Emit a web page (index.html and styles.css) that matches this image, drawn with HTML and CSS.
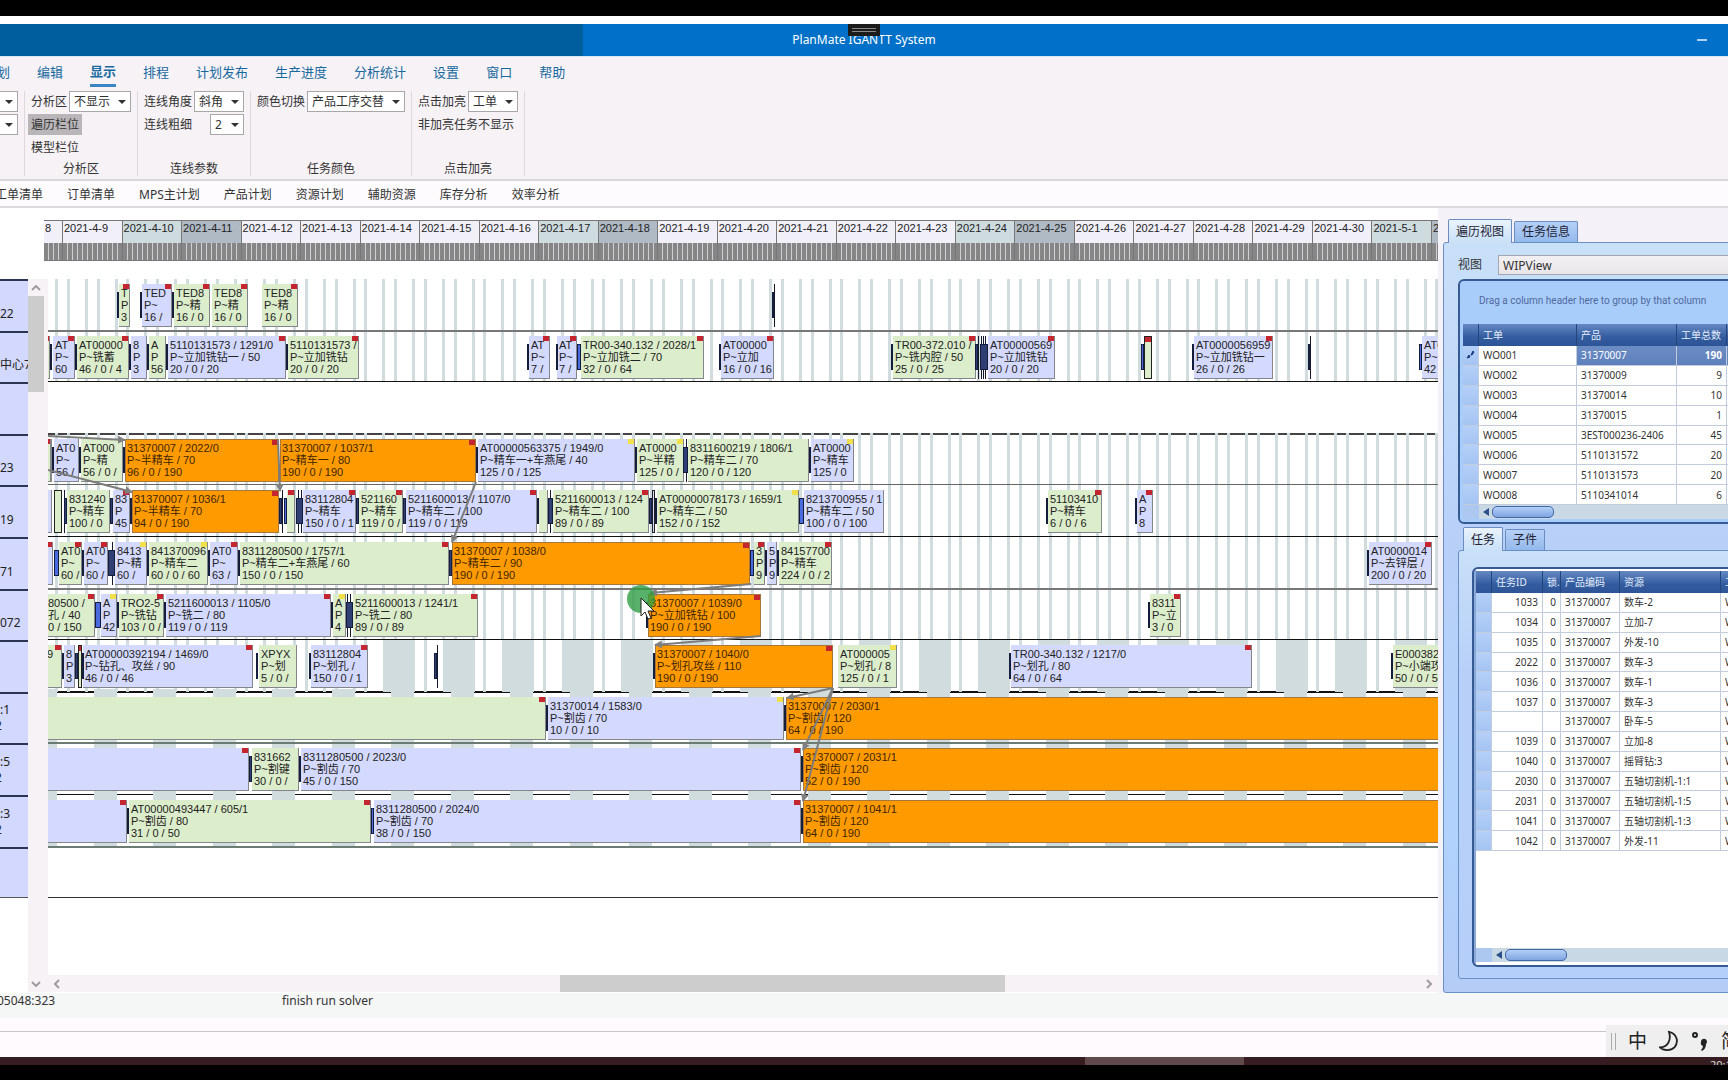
FILE: index.html
```html
<!DOCTYPE html>
<html lang="zh-CN">
<head>
<meta charset="utf-8">
<title>PlanMate IGANTT System</title>
<link rel="stylesheet" href="styles.css">
</head>
<body>
<div class="app">
  <header class="titlebar">
    <div class="titlebar-side"></div>
    <h1 class="title">PlanMate IGANTT System</h1>
    <div class="grip"><span></span></div>
    <button class="minimize" aria-label="最小化"></button>
  </header>

  <section class="ribbon">
    <nav class="menu">
      <button>计划</button>
      <button>编辑</button>
      <button class="active">显示</button>
      <button>排程</button>
      <button>计划发布</button>
      <button>生产进度</button>
      <button>分析统计</button>
      <button>设置</button>
      <button>窗口</button>
      <button>帮助</button>
    </nav>
    <div class="groups">
      <div class="group group-first">
        <div class="field"><span class="pick"><select aria-label="视图一"><option></option></select></span></div>
        <div class="field"><span class="pick"><select aria-label="视图二"><option></option></select></span></div>
      </div>
      <div class="group">
        <div class="field"><label for="area">分析区</label><span class="pick w-medium"><select id="area"><option>不显示</option></select></span></div>
        <div class="field"><button class="toggle on">遍历栏位</button></div>
        <div class="field"><button class="toggle">模型栏位</button></div>
        <div class="group-name">分析区</div>
      </div>
      <div class="group">
        <div class="field"><label for="angle">连线角度</label><span class="pick w-small"><select id="angle"><option>斜角</option></select></span></div>
        <div class="field"><label for="weight">连线粗细</label><span class="pick w-tiny"><select id="weight"><option>2</option></select></span></div>
        <div class="group-name">连线参数</div>
      </div>
      <div class="group">
        <div class="field"><label for="color">颜色切换</label><span class="pick w-large"><select id="color"><option>产品工序交替</option></select></span></div>
        <div class="group-name">任务颜色</div>
      </div>
      <div class="group">
        <div class="field"><label for="light">点击加亮</label><span class="pick w-small"><select id="light"><option>工单</option></select></span></div>
        <div class="field"><button class="toggle">非加亮任务不显示</button></div>
        <div class="group-name">点击加亮</div>
      </div>
    </div>
  </section>

  <nav class="sheets">
    <button>工单清单</button>
    <button>订单清单</button>
    <button>MPS主计划</button>
    <button>产品计划</button>
    <button>资源计划</button>
    <button>辅助资源</button>
    <button>库存分析</button>
    <button>效率分析</button>
  </nav>

  <main class="main">
    <section class="gantt">
      <div class="days" id="days"></div>
      <div class="gantt-body">
        <div class="resources" id="resources"></div>
        <div class="vscroll">
          <svg width="10" height="6" viewBox="0 0 10 6"><path d="M1 5 5 1 9 5"/></svg>
          <div class="vthumb"></div>
          <svg width="10" height="6" viewBox="0 0 10 6"><path d="M1 1 5 5 9 1"/></svg>
        </div>
        <div class="canvas" id="canvas"></div>
        <div class="hscroll">
          <svg width="6" height="10" viewBox="0 0 6 10"><path d="M5 1 1 5 5 9"/></svg>
          <div class="hthumb"></div>
          <svg width="6" height="10" viewBox="0 0 6 10"><path d="M1 1 5 5 1 9"/></svg>
        </div>
      </div>
    </section>

    <aside class="side">
      <div class="tabs">
        <button class="tab active">遍历视图</button>
        <button class="tab">任务信息</button>
      </div>
      <div class="pane">
        <div class="view"><label for="view">视图</label><input id="view" value="WIPView"></div>
        <div class="frame">
          <p class="hint">Drag a column header here to group by that column</p>
          <table class="data orders">
            <colgroup><col class="c-mark"><col class="c-order"><col class="c-product"><col class="c-total"><col></colgroup>
            <thead><tr><th></th><th>工单</th><th>产品</th><th>工单总数</th><th></th></tr></thead>
            <tbody>
              <tr class="selected"><td class="mark"><svg width="9" height="9" viewBox="0 0 9 9"><path d="M1 8 3 5 4 7zM5 5 7 1 8 2 6 5z" fill="#173a80" stroke="#173a80"/></svg></td><td>WO001</td><td>31370007</td><td>190</td><td></td></tr>
              <tr><td></td><td>WO002</td><td>31370009</td><td>9</td><td></td></tr>
              <tr><td></td><td>WO003</td><td>31370014</td><td>10</td><td></td></tr>
              <tr><td></td><td>WO004</td><td>31370015</td><td>1</td><td></td></tr>
              <tr><td></td><td>WO005</td><td>3EST000236-2406</td><td>45</td><td></td></tr>
              <tr><td></td><td>WO006</td><td>5110131572</td><td>20</td><td></td></tr>
              <tr><td></td><td>WO007</td><td>5110131573</td><td>20</td><td></td></tr>
              <tr><td></td><td>WO008</td><td>5110341014</td><td>6</td><td></td></tr>
            </tbody>
          </table>
          <div class="gridscroll"><i class="arrow"></i><i class="pill"></i></div>
        </div>
        <div class="tabs inner">
          <button class="tab active">任务</button>
          <button class="tab">子件</button>
        </div>
        <div class="pane pane-inner">
          <div class="frame frame-tasks">
            <table class="data tasks">
              <colgroup><col class="c-mark"><col class="c-id"><col class="c-lock"><col class="c-code"><col class="c-res"><col></colgroup>
              <thead><tr><th></th><th>任务ID</th><th>锁.</th><th>产品编码</th><th>资源</th><th>工单</th></tr></thead>
              <tbody>
                <tr><td></td><td>1033</td><td>0</td><td>31370007</td><td>数车-2</td><td>W</td></tr>
                <tr><td></td><td>1034</td><td>0</td><td>31370007</td><td>立加-7</td><td>W</td></tr>
                <tr><td></td><td>1035</td><td>0</td><td>31370007</td><td>外发-10</td><td>W</td></tr>
                <tr><td></td><td>2022</td><td>0</td><td>31370007</td><td>数车-3</td><td>W</td></tr>
                <tr><td></td><td>1036</td><td>0</td><td>31370007</td><td>数车-1</td><td>W</td></tr>
                <tr><td></td><td>1037</td><td>0</td><td>31370007</td><td>数车-3</td><td>W</td></tr>
                <tr><td></td><td></td><td></td><td>31370007</td><td>卧车-5</td><td>W</td></tr>
                <tr><td></td><td>1039</td><td>0</td><td>31370007</td><td>立加-8</td><td>W</td></tr>
                <tr><td></td><td>1040</td><td>0</td><td>31370007</td><td>摇臂钻:3</td><td>W</td></tr>
                <tr><td></td><td>2030</td><td>0</td><td>31370007</td><td>五轴切割机-1:1</td><td>W</td></tr>
                <tr><td></td><td>2031</td><td>0</td><td>31370007</td><td>五轴切割机-1:5</td><td>W</td></tr>
                <tr><td></td><td>1041</td><td>0</td><td>31370007</td><td>五轴切割机-1:3</td><td>W</td></tr>
                <tr><td></td><td>1042</td><td>0</td><td>31370007</td><td>外发-11</td><td>W</td></tr>
              </tbody>
            </table>
            <div class="gridscroll"><i class="arrow"></i><i class="pill"></i></div>
          </div>
        </div>
      </div>
    </aside>
  </main>

  <footer class="status"><span class="counter">05048:323</span><span>finish run solver</span></footer>
  <div class="dock">
    <div class="ime">
      <i class="handle"></i>
      <span>中</span>
      <svg width="20" height="22" viewBox="0 0 22 22"><path d="M11 1C20 3 22 12 17 18 13 22 5 22 1 18 9 18 14 11 11 1Z" fill="none" stroke="#222" stroke-width="2"/></svg>
      <svg width="18" height="22" viewBox="0 0 18 22"><circle cx="4" cy="5" r="2" fill="none" stroke="#222" stroke-width="2"/><path d="M10 12a3 3 0 1 1 5 2q0 5-4 7l-1-1q2-2 2-4a3 3 0 0 1-2-4z" fill="#222"/></svg>
      <span>简</span>
    </div>
  </div>
  <div class="taskbar"><div class="taskbar-item"></div><span>20:1</span></div>
</div>
<script src="app.js"></script>
</body>
</html>
```
FILE: styles.css
```css
* { box-sizing: border-box; }
body { margin: 0; background: #000; font: 12px/16px "Noto Sans", "Noto Sans CJK SC", sans-serif; color: #333; overflow: hidden; }
button, select, input { font: inherit; color: inherit; }
button { border: 0; background: none; padding: 0; white-space: nowrap; }
.app { display: flex; flex-direction: column; min-height: 100vh; padding: 16px 0; overflow: hidden; }

.titlebar { position: relative; display: flex; align-items: center; height: 41px; border-top: 8px solid #fff; border-bottom: 1px solid #d5e8f6; background: #0070c8; }
.titlebar-side { width: 583px; align-self: stretch; background: #005d9e; }
.title { position: absolute; left: 0; right: 0; margin: 0; text-align: center; font-size: 12px; font-weight: 400; line-height: 16px; color: #fff; }
.grip { position: absolute; top: 0; left: 50%; width: 32px; height: 12px; margin-left: -16px; padding: 4px; background: #1c1c1c; }
.grip span { display: block; height: 4px; border: solid #8a8a8a; border-width: 1px 0; }
.minimize { width: 10px; height: 2px; margin: 0 21px 0 auto; background: #a9d4f5; }

.ribbon { background: #f6f2f6; border-bottom: 2px solid #d9d5d9; height: 124px; }
.menu { display: flex; gap: 27px; height: 34px; margin-left: -16px; font-size: 13px; color: #17699f; }
.menu button { height: 30px; line-height: 26px; }
.menu .active { font-weight: 700; border-bottom: 3px solid #3a86c4; }
.groups { display: flex; height: 85px; }
.group { display: flex; flex-direction: column; gap: 2px; padding: 0 6px; border-right: 1px solid #dcd8dc; }
.group-first { width: 25px; align-items: flex-end; }
.group-first .pick { width: 60px; }
.field { display: flex; align-items: center; justify-content: space-between; gap: 2px; height: 21px; }
.group-name { margin-top: auto; line-height: 14px; text-align: center; }
.pick { position: relative; display: block; height: 21px; }
.pick::after { content: ""; position: absolute; right: 5px; top: 9px; border: 4px solid transparent; border-top-color: #333; border-bottom: 0; }
.pick select { appearance: none; width: 100%; height: 21px; padding: 0 4px; border: 1px solid #aaa6aa; border-radius: 0; background: #fff; }
.w-tiny { width: 34px; }
.w-small { width: 50px; }
.w-medium { width: 62px; }
.w-large { width: 98px; }
.toggle { height: 21px; }
.toggle.on { margin-left: -3px; padding: 0 3px; background: #b9b5b9; }

.sheets { display: flex; gap: 24px; height: 27px; margin-left: -5px; padding-top: 3px; border-bottom: 2px solid #dedade; background: #fdfbfe; }

.main { display: flex; background: #fdfcfe; }
.gantt { flex: 1; min-width: 0; padding-top: 12px; background: #fff; }
.days { display: grid; grid-template-columns: 18px repeat(23, 1fr) 7px; margin: 0 0 18px 44px; border: solid #777; border-width: 1px 0; height: 41px; font: 11px/15px "Liberation Sans", sans-serif; }
.day { overflow: hidden; white-space: nowrap; border-left: 1px solid #777; padding-left: 1px; background: #f1f0f9; color: #222; }
.day:first-child { border: 0; }
.day::after { content: ""; display: block; height: 17px; margin: 7px 0 0 -1px; background: repeating-linear-gradient(90deg, #868686 0 4px, #cfcfd4 4px 5px); }
.day.sat { background: #cedbdf; }
.day.sun { background: #b0bac4; }
.gantt-body { display: grid; grid-template-columns: 28px 20px 1fr; grid-template-rows: 696px 17px; }
.resources { grid-row: span 2; overflow: hidden; background: #fff; }
.resource { display: flex; flex-direction: column; justify-content: flex-end; padding-bottom: 9px; border-top: 2px solid #2c3550; background: #d3d9fe; white-space: nowrap; color: #222; }
.resource:last-child { border-bottom: 1px solid #555; }
.resource .tail { margin-left: -5px; }
.vscroll { grid-row: span 2; display: flex; flex-direction: column; align-items: center; padding: 6px 4px 5px 0; background: #f6f2f6; }
.vthumb { width: 16px; height: 96px; margin: 5px 0 auto; background: #cdcccd; }
.vscroll svg, .hscroll svg { fill: none; stroke: #a09ca0; stroke-width: 2; }
.hscroll { display: flex; align-items: center; padding: 0 6px; background: #f6f2f6; }
.hthumb { width: 445px; height: 17px; margin: 0 auto 0 500px; background: #cdcdcd; }

.canvas { position: relative; overflow: hidden; background: #fff; font: 11px/12px "Liberation Sans", "Noto Sans CJK SC", sans-serif; color: #222; }
.canvas svg { position: absolute; left: 0; top: 0; }
.task { position: absolute; height: 43px; padding: 3px 0 0 2px; overflow: hidden; white-space: pre; border: solid #85858c; border-width: 0 1px 1px 0; }
.green { background: #dcedcb; }
.lav { background: #d4d9ff; }
.orange { background: #ff9a00; color: #3d2600; border-width: 1px; border-color: #a8763a; padding: 2px 0 0 1px; }
.slim { padding: 0; border: 1px solid #222; }
.hair { padding: 0; border: 0; background: #14182c; }
.flag { position: absolute; top: 0; right: 0; width: 6px; height: 5px; background: #c4252f; }
.flag.y { background: #f2e04a; }
.setup { position: absolute; height: 26px; background: #2f3f74; border: 1px solid #141d3c; }
.setup.blue { background: #4a6ae0; }

.side { width: 290px; padding: 11px 0 0 5px; background: #f4f2f8; overflow: hidden; }
.tabs { display: flex; align-items: flex-end; gap: 2px; height: 23px; padding-left: 5px; }
.tab { height: 21px; padding: 0 7px; border: 1px solid #6a8cc0; border-bottom: 0; border-radius: 2px 2px 0 0; background: linear-gradient(#b5d0f6, #93b9ec); color: #223; }
.tab.active { position: relative; height: 24px; margin-bottom: -1px; background: linear-gradient(#eaf3fd, #c8e0f8); }
.pane { width: 320px; height: 751px; padding: 12px 0 0 14px; border: 1px solid #6a8fc4; border-radius: 3px; background: linear-gradient(#c8e0f8, #b8d0f8 300px, #b0d2fc 600px, #b4ccf6); }
.view { display: flex; align-items: center; gap: 16px; height: 20px; margin-bottom: 4px; }
.view input { flex: 1; min-width: 0; height: 20px; padding: 0 4px; border: 1px solid #a5a5b0; background: linear-gradient(#f3f0f3, #e9e6ea); }
.frame { border: 2px solid #365a94; border-radius: 6px; padding: 0 0 3px 3px; background: #a9cdfb; height: 245px; overflow: hidden; }
.hint { margin: 0; height: 43px; padding: 12px 16px; font: 10px/16px Roboto, sans-serif; color: #50699c; white-space: nowrap; }
.data { width: 320px; table-layout: fixed; border-collapse: separate; border-spacing: 0; background: #fff; font-size: 10px; line-height: 14px; }
.data th { height: 22px; padding: 0 4px; text-align: left; font-weight: 400; color: #e4eefc; border-right: 1px solid #24467e; background: linear-gradient(#6589c4, #335c9f 60%, #2d5496); white-space: nowrap; overflow: hidden; }
.data td { padding: 0 4px; border: solid #c3ccdc; border-width: 0 1px 1px 0; white-space: nowrap; overflow: hidden; color: #333; }
.data td:first-child { background: linear-gradient(#b5d0f8, #a4c4f2); padding: 0 3px; }
.orders { height: 181px; }
.orders td:nth-child(4), .tasks td:nth-child(2), .tasks td:nth-child(3) { text-align: right; }
.orders .selected td:nth-child(n+3) { background: linear-gradient(#6c8cc4, #5d80bc); color: #fff; }
.orders .selected td:nth-child(4) { font-weight: 700; }
.tasks { height: 280px; }
.c-mark { width: 16px; }
.c-order { width: 98px; }
.c-product { width: 100px; }
.c-total { width: 50px; }
.c-id { width: 51px; }
.c-lock { width: 18px; }
.c-code { width: 59px; }
.c-res { width: 101px; }
.gridscroll { display: flex; align-items: center; gap: 3px; height: 14px; padding-left: 20px; background: linear-gradient(90deg, #adc8f0 16px, #c8d8e4 16px); }
.arrow { border: 4px solid transparent; border-right: 6px solid #2c5088; border-left: 0; }
.pill { width: 62px; height: 12px; border: 1px solid #4467a4; border-radius: 5px; background: linear-gradient(#b4d0fa, #7fa4e0); }
.inner { margin-top: 4px; height: 22px; }
.pane.pane-inner { height: 429px; padding: 16px 0 0 13px; background: linear-gradient(#c8e0f8, #b8d0f8 120px, #b4cff9); }
.frame-tasks { display: flex; flex-direction: column; height: 400px; padding: 2px 0 3px 2px; background: linear-gradient(90deg, #8aa9d6 2px, #fff 2px); }
.frame-tasks .gridscroll { margin-top: auto; }

.status { display: flex; height: 25px; margin-left: -3px; background: #f5f6f6; line-height: 16px; }
.counter { width: 285px; }
.dock { display: flex; justify-content: flex-end; align-items: flex-end; height: 39px; background: linear-gradient(#fefafe 13px, #c9c5c9 13px, #c9c5c9 14px, #fefafe 14px); }
.ime { display: flex; align-items: center; gap: 12px; width: 122px; height: 32px; padding-left: 5px; overflow: hidden; background: #efeff0; font-size: 19px; line-height: 28px; color: #222; }
.ime span { flex: none; }
.ime svg { flex: none; }
.handle { flex: none; width: 5px; height: 17px; border: solid #aaa; border-width: 0 1px; }
.taskbar { display: flex; justify-content: space-between; height: 8px; overflow: hidden; background: #371d21; color: #ddd; font-size: 11px; }
.taskbar-item { width: 159px; margin-left: 1085px; background: #604a4b; }
.taskbar span { width: 18px; line-height: 16px; white-space: nowrap; }
```
FILE: app.js
```js
// Horizontal positions are window pixels; the canvas starts at LEFT.
const LEFT = 48, PITCH = 51.6, DAY = 59.5, DAY0 = 62.5;
const rowTop = i => Math.round(i * PITCH);

// Day header
const dates = ['8'];
for (let d = 9; d <= 30; d++) dates.push('2021-4-' + d);
dates.push('2021-5-1', '2');
document.getElementById('days').innerHTML = dates.map((t, i) => {
  const k = (i + 8) % 7; // 10 April is a Saturday
  const cls = k === 3 ? ' sat' : k === 4 ? ' sun' : '';
  return `<div class="day${cls}">${t}</div>`;
}).join('');

// Resource column
const names = [['22'], ['中心7'], [], ['23'], ['19'], ['71'], ['072'], [], [':1', '2'], [':5', '2'], [':3', '2'], []];
document.getElementById('resources').innerHTML = names.map((n, i) =>
  `<div class="resource" style="height:${rowTop(i + 1) - rowTop(i)}px">` +
  n.map((t, j) => `<span class="${j ? 'tail' : ''}">${t}</span>`).join('') + '</div>').join('');

// Tasks: [start, end, colour, flag, lines]
const G = 'green', L = 'lav', O = 'orange', GS = 'green slim', LS = 'lav slim', H = 'hair';
const rows = [
  [[119,130,G,'r','T|P|3'],[142,172,L,'r','TED|P~|16 /'],[174,210,G,'r','TED8|P~精|16 / 0'],[212,248,G,'r','TED8|P~精|16 / 0'],[262,298,G,'r','TED8|P~精|16 / 0'],[774,775,H]],
  [[40,50,G,'r'],[53,75,L,'r','AT|P~|60'],[77,129,G,'r','AT00000|P~铣蓄|46 / 0 / 4'],[131,147,L,'','8|P|3'],[149,166,G,'','A|P|56'],[168,286,L,'r','5110131573 / 1291/0|P~立加铣钻一 / 50|20 / 0 / 20'],[288,359,G,'r','5110131573 /|P~立加铣钻|20 / 0 / 20'],
   [529,550,L,'r','AT|P~|7 /'],[557,577,L,'r','AT|P~|7 /'],[581,704,G,'r','TR00-340.132 / 2028/1|P~立加铣二 / 70|32 / 0 / 64'],[721,774,L,'r','AT00000|P~立加|16 / 0 / 16'],
   [893,976,G,'r','TR00-372.010 /|P~铣内腔 / 50|25 / 0 / 25'],[978,979,H],[981,982,H],[983,984,H],[985,986,H],[988,1055,L,'r','AT00000569|P~立加铣钻|20 / 0 / 20'],[1144,1152,GS,'r'],[1194,1273,L,'r','AT0000056959|P~立加铣钻一|26 / 0 / 26'],[1310,1311,H],[1422,1450,L,'','AT0|P~立|42 / 0']],
  [],
  [[40,52,G],[45,51,'','r'],[54,79,L,'','AT0|P~|56 /'],[81,123,G,'','AT000|P~精|56 / 0 /'],[125,279,O,'r','31370007 / 2022/0|P~半精车 / 70|96 / 0 / 190'],[280,476,O,'r','31370007 / 1037/1|P~精车一 / 80|190 / 0 / 190'],[478,635,L,'y','AT00000563375 / 1949/0|P~精车一+车燕尾 / 40|125 / 0 / 125'],[637,684,G,'y','AT0000|P~半精|125 / 0 /'],[686,687,H],[688,809,G,'','8311600219 / 1806/1|P~精车二 / 70|120 / 0 / 120'],[811,854,L,'y','AT0000|P~精车|125 / 0']],
  [[40,52,L],[54,62,GS],[64,65,H],[67,110,G,'','831240|P~精车|100 / 0'],[113,130,L,'r','83|P|45'],[132,279,O,'r','31370007 / 1036/1|P~半精车 / 70|94 / 0 / 190'],[282,283,H],[287,295,G,'r'],[298,299,H],[301,302,H],[303,356,L,'r','83112804|P~精车|150 / 0 / 1'],[359,403,G,'r','521160|P~精车|119 / 0 /'],[406,537,L,'r','5211600013 / 1107/0|P~精车二 / 100|119 / 0 / 119'],[539,548,G],[550,551,H],[553,649,G,'r','5211600013 / 124|P~精车二 / 100|89 / 0 / 89'],[652,655,LS],[657,799,G,'y','AT00000078173 / 1659/1|P~精车二 / 50|152 / 0 / 152'],[804,884,L,'','8213700955 / 1|P~精车二 / 50|100 / 0 / 100'],
   [1048,1102,G,'r','51103410|P~精车|6 / 0 / 6'],[1137,1153,L,'r','A|P|8']],
  [[40,53,L,'r'],[59,82,G,'r','AT0|P~|60 /'],[84,108,L,'r','AT0|P~|60 /'],[112,113,H],[115,147,L,'y','8413|P~精|60 /'],[149,208,G,'y','841370096|P~精车二|60 / 0 / 60'],[210,238,L,'r','AT0|P~|63 /'],[240,449,G,'r','8311280500 / 1757/1|P~精车二+车燕尾 / 60|150 / 0 / 150'],[452,750,O,'r','31370007 / 1038/0|P~精车二 / 90|190 / 0 / 190'],[754,765,G,'r','3|P|9'],[767,777,L,'','5|P|9'],[779,832,G,'r','84157700|P~精车|224 / 0 / 2'],[1369,1432,L,'r','AT0000014|P~去锌层 /|200 / 0 / 20']],
  [[46,95,G,'r','80500 /|孔 / 40|0 / 150'],[101,117,L,'y','A|P|42'],[119,164,G,'r','TRO2-5|P~铣钻|103 / 0 /'],[166,331,L,'r','5211600013 / 1105/0|P~铣二 / 80|119 / 0 / 119'],[333,346,G,'y','A|P|4'],[347,348,H],[350,351,H],[353,478,G,'r','5211600013 / 1241/1|P~铣二 / 80|89 / 0 / 89'],[648,761,O,'r','31370007 / 1039/0|P~立加铣钻 / 100|190 / 0 / 190'],[1150,1181,G,'r','8311|P~立|3 / 0']],
  [[45,62,G,'r','9'],[64,75,L,'','8|P|3'],[78,82,GS,'r'],[83,253,L,'r','AT00000392194 / 1469/0|P~钻孔、攻丝 / 90|46 / 0 / 46'],[259,297,G,'','XPYX|P~划|5 / 0 /'],[311,368,L,'r','83112804|P~划孔 /|150 / 0 / 1'],[437,438,H],[655,833,O,'r','31370007 / 1040/0|P~划孔攻丝 / 110|190 / 0 / 190'],[838,897,G,'y','AT000005|P~划孔 / 8|125 / 0 / 1'],[1011,1252,L,'r','TR00-340.132 / 1217/0|P~划孔 / 80|64 / 0 / 64'],[1393,1450,G,'','E000382|P~小端攻|50 / 0 / 50']],
  [[40,546,G,'r'],[548,784,L,'y','31370014 / 1583/0|P~割齿 / 70|10 / 0 / 10'],[786,1450,O,'','31370007 / 2030/1|P~割齿 / 120|64 / 0 / 190']],
  [[40,249,L,'r'],[252,299,G,'','831662|P~割键|30 / 0 /'],[301,801,L,'r','8311280500 / 2023/0|P~割齿 / 70|45 / 0 / 150'],[803,1450,O,'','31370007 / 2031/1|P~割齿 / 120|52 / 0 / 190']],
  [[40,127,L,'r'],[129,371,G,'r','AT00000493447 / 605/1|P~割齿 / 80|31 / 0 / 50'],[374,801,L,'r','8311280500 / 2024/0|P~割齿 / 70|38 / 0 / 150'],[803,1450,O,'','31370007 / 1041/1|P~割齿 / 120|64 / 0 / 190']]
];

// Setup times in front of tasks: [row, start, end, blue]
const setups = [
  [0,117,119],[0,140,142],[0,172,174],[0,772,774],
  [1,50,52],[1,75,77],[1,129,131],[1,147,149],[1,166,168],[1,286,288],[1,527,529],[1,556,558],[1,577,581,1],[1,719,721],[1,891,893],[1,975,978],[1,980,988],[1,1141,1144,1],[1,1192,1194],[1,1308,1310],[1,1419,1422,1],
  [3,52,54],[3,79,81],[3,123,125],[3,476,478],[3,635,637],[3,683,688],[3,809,811],
  [4,64,67],[4,110,113],[4,130,132],[4,279,282],[4,284,287,1],[4,296,303],[4,356,359],[4,403,406],[4,537,539],[4,548,553],[4,649,652],[4,655,657],[4,799,804,1],[4,1046,1048],[4,1135,1137,1],
  [5,54,59,1],[5,82,84],[5,108,115],[5,147,149],[5,208,210],[5,238,240],[5,449,452],[5,750,754,1],[5,765,767],[5,777,779],[5,1367,1369],
  [6,95,101,1],[6,117,119],[6,164,166],[6,331,333],[6,346,353],[6,646,648],[6,1148,1150],
  [7,62,64],[7,75,78],[7,82,84],[7,256,258],[7,309,311],[7,434,437],[7,653,655],[7,1009,1011],[7,1391,1393],
  [8,546,548],[8,784,786],[9,249,252],[9,299,301],[9,801,803],[10,127,129],[10,371,374,1],[10,801,803]
];

// Non-working time
const rect = (x, w, r0, r1, up = 0) =>
  `<rect x="${Math.round(x - LEFT)}" y="${rowTop(r0) - up}" width="${w}" height="${rowTop(r1) - rowTop(r0) + up}"/>`;
let idle = '', shade = '';
for (let d = -1; d < 24; d++) {
  const x = DAY0 + d * DAY;
  for (const o of [4, 22, 34, 52]) {
    idle += rect(x + o, 3, 0, 2);
    idle += rect(x + o, 3, 3, 7, 1);
    if (o === 4 || d < 5) idle += rect(x + o, 3, 7, 8);
  }
  if (d >= 5) shade += rect(x + 23, 32, 7, 8);
  shade += rect(x + 31, 23, 8, 11, 3);
}

// Row lines: solid ones lie over the idle time, broken ones under it
const line = (i, c, w) => `<rect x="0" y="${rowTop(i) - 1}" width="1390" height="${w}" fill="${c}"/>`;
const under = line(3, '#444', 2) + line(8, '#111', 2) + line(10, '#111', 1);
const over = line(1, '#777', 2) + line(2, '#111', 1) + line(4, '#666', 1) + line(5, '#111', 1) + line(6, '#777', 2) +
  line(7, '#111', 1) + line(9, '#6c7c74', 2) + line(11, '#6c7c74', 2) + line(12, '#333', 1);

const taskHtml = rows.map((r, i) => r.map(([a, b, c, f, t]) => {
  const flag = f ? `<i class="flag ${f}"></i>` : '';
  return `<div class="task ${c}" style="left:${a - LEFT}px;top:${rowTop(i) + 5}px;width:${b - a}px">${(t || '').replace(/\|/g, '\n')}${flag}</div>`;
}).join('')).join('');
const setupHtml = setups.map(([r, a, b, blue]) =>
  `<i class="setup${blue ? ' blue' : ''}" style="left:${a - LEFT}px;top:${rowTop(r) + 13}px;width:${b - a}px"></i>`).join('');

// Links between the operations of one work order
const links = [[48,157,125,161],[48,191,132,213],[278,161,280,212],[476,203,452,263],[751,305,650,314],[761,357,655,366],[833,409,787,419],[833,409,803,471],[833,409,803,522]]
  .map(([a, b, c, d]) => `<path d="M${a - LEFT} ${b}L${c - LEFT} ${d}" marker-end="url(#tip)"/>`).join('');

document.getElementById('canvas').innerHTML =
  `<svg width="1390" height="696">${under}<g fill="#d0dcde">${idle}${shade}</g>${over}</svg>` +
  taskHtml + setupHtml +
  `<svg width="1390" height="696"><defs><marker id="tip" markerWidth="9" markerHeight="8" refX="7" refY="4" orient="auto" markerUnits="userSpaceOnUse"><path d="M0 0 8 4 0 8Z" fill="#808080"/></marker></defs>
  <g stroke="#7c7c7c" stroke-width="2" fill="none">${links}</g>
  <circle cx="593" cy="320" r="14" fill="#2f9e44" opacity=".8"/>
  <path d="M593 319v18l4-4 3 7 3-1-3-7h6z" fill="#fff" stroke="#222"/></svg>`;
```
